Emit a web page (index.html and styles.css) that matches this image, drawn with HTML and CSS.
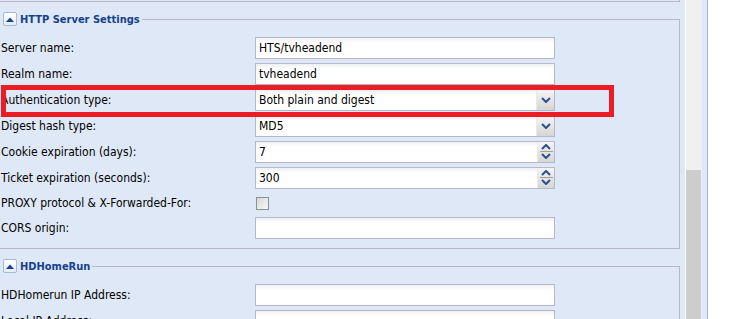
FILE: index.html
```html
<!DOCTYPE html>
<html lang="en">
<head>
  <meta charset="UTF-8" />
  <title>Configuration - General</title>
  <link rel="stylesheet" href="styles.css">
</head>
<body>

  <div class="screen">
    <div class="panel">
      <div class="prev-set"></div>

      <fieldset class="set">
        <legend>
          <span class="toggle"><svg width="8" height="5" viewBox="0 0 8 5"><path d="M0 5 L4 0.5 L8 5 Z" fill="#15428b"/></svg></span>
          HTTP Server Settings
        </legend>

        <div class="row">
          <label>Server name:</label>
          <div class="field">HTS/tvheadend</div>
        </div>
        <div class="row">
          <label>Realm name:</label>
          <div class="field">tvheadend</div>
        </div>
        <div class="row">
          <label>Authentication type:</label>
          <div class="field combo">
            <span class="value">Both plain and digest</span>
            <span class="trigger"><svg width="10" height="6" viewBox="0 0 10 6"><polyline points="1,1 5,5 9,1" fill="none" stroke="#2d4f8e" stroke-width="2"/></svg></span>
          </div>
        </div>
        <div class="row">
          <label>Digest hash type:</label>
          <div class="field combo">
            <span class="value">MD5</span>
            <span class="trigger"><svg width="10" height="6" viewBox="0 0 10 6"><polyline points="1,1 5,5 9,1" fill="none" stroke="#2d4f8e" stroke-width="2"/></svg></span>
          </div>
        </div>
        <div class="row">
          <label>Cookie expiration (days):</label>
          <div class="field combo">
            <span class="value">7</span>
            <span class="trigger spin">
              <svg width="10" height="6" viewBox="0 0 10 6"><polyline points="1,5 5,1 9,5" fill="none" stroke="#2d4f8e" stroke-width="2"/></svg>
              <span class="sep"></span>
              <svg width="10" height="6" viewBox="0 0 10 6"><polyline points="1,1 5,5 9,1" fill="none" stroke="#2d4f8e" stroke-width="2"/></svg>
            </span>
          </div>
        </div>
        <div class="row">
          <label>Ticket expiration (seconds):</label>
          <div class="field combo">
            <span class="value">300</span>
            <span class="trigger spin">
              <svg width="10" height="6" viewBox="0 0 10 6"><polyline points="1,5 5,1 9,5" fill="none" stroke="#2d4f8e" stroke-width="2"/></svg>
              <span class="sep"></span>
              <svg width="10" height="6" viewBox="0 0 10 6"><polyline points="1,1 5,5 9,1" fill="none" stroke="#2d4f8e" stroke-width="2"/></svg>
            </span>
          </div>
        </div>
        <div class="row short">
          <label>PROXY protocol &amp; X-Forwarded-For:</label>
          <span class="check"></span>
        </div>
        <div class="row">
          <label>CORS origin:</label>
          <div class="field"></div>
        </div>
      </fieldset>

      <fieldset class="set">
        <legend>
          <span class="toggle"><svg width="8" height="5" viewBox="0 0 8 5"><path d="M0 5 L4 0.5 L8 5 Z" fill="#15428b"/></svg></span>
          HDHomeRun
        </legend>

        <div class="row">
          <label>HDHomerun IP Address:</label>
          <div class="field"></div>
        </div>
        <div class="row">
          <label>Local IP Address:</label>
          <div class="field"></div>
        </div>
      </fieldset>
    </div>

    <div class="scrollbar"><div class="thumb"></div></div>
    <div class="edge"></div>
    <div class="side"></div>

    <div class="mark"></div>
  </div>

</body>
</html>
```

FILE: styles.css
```css
body {
  margin: 0;
  background: #fff;
  font-family: 'DejaVu Sans Condensed', 'DejaVu Sans', sans-serif;
  font-size: 12px;
  color: #000;
}

.screen {
  position: relative;
  display: flex;
  height: 319px;
  overflow: hidden;
  background: #dfe8f6;
}

.panel {
  width: 685px;
  flex: none;
  padding-right: 5px;
  box-sizing: border-box;
}

.prev-set {
  height: 1px;
  border-bottom: 1px solid #b5b8c8;
  border-right: 1px solid #b5b8c8;
}

.set {
  margin: 10px 0 0;
  padding: 11px 0 5px;
  border: 1px solid #b5b8c8;
  border-left: none;
  min-width: 0;
}

.set legend {
  display: flex;
  align-items: center;
  height: 14px;
  padding: 0 2px 0 3px;
  font-size: 11px;
  font-weight: bold;
  color: #15428b;
}

.toggle {
  display: flex;
  align-items: center;
  justify-content: center;
  width: 12px;
  height: 12px;
  margin-right: 3px;
  border: 1px solid #a3bad9;
  border-radius: 2px;
  background: linear-gradient(#ffffff, #e3ebf7);
}

.row {
  display: flex;
  align-items: center;
  height: 22px;
  margin-bottom: 4px;
}

.row.short {
  height: 20px;
}

.row label {
  width: 254px;
  padding-left: 1px;
  flex: none;
}

.field {
  display: flex;
  align-items: center;
  width: 300px;
  height: 22px;
  box-sizing: border-box;
  padding-left: 3px;
  border: 1px solid #b5b8c8;
  background: linear-gradient(#eef0f2, #fff 5px);
}

.combo {
  padding-right: 0;
}

.combo .value {
  flex: 1;
}

.trigger {
  display: flex;
  align-items: center;
  justify-content: center;
  width: 17px;
  height: 20px;
  border-left: 1px solid #eaeaea;
  background: linear-gradient(#f5f5f5, #d6d6d6);
}

.trigger.spin {
  flex-direction: column;
  justify-content: space-between;
  padding: 2px 0 3px;
  box-sizing: border-box;
}

.sep {
  width: 13px;
  height: 1px;
  background: #a39f8f;
}

.check {
  width: 11px;
  height: 11px;
  margin-left: 1px;
  border: 1px solid #8e8f8f;
  background: linear-gradient(135deg, #d6d6d6, #fafafa);
}

.scrollbar {
  width: 16px;
  flex: none;
  border-left: 1px solid #fff;
  background: #f0f0f0;
}

.thumb {
  width: 15px;
  margin-top: 170px;
  height: 200px;
  background: #cdcdcd;
}

.edge {
  width: 5px;
  flex: none;
  border-right: 1px solid #99bbe8;
}

.side {
  flex: 1;
  background: #fff;
}

.mark {
  position: absolute;
  left: 1px;
  top: 85px;
  width: 603px;
  height: 22px;
  border: 5px solid #ed1c24;
}
```
